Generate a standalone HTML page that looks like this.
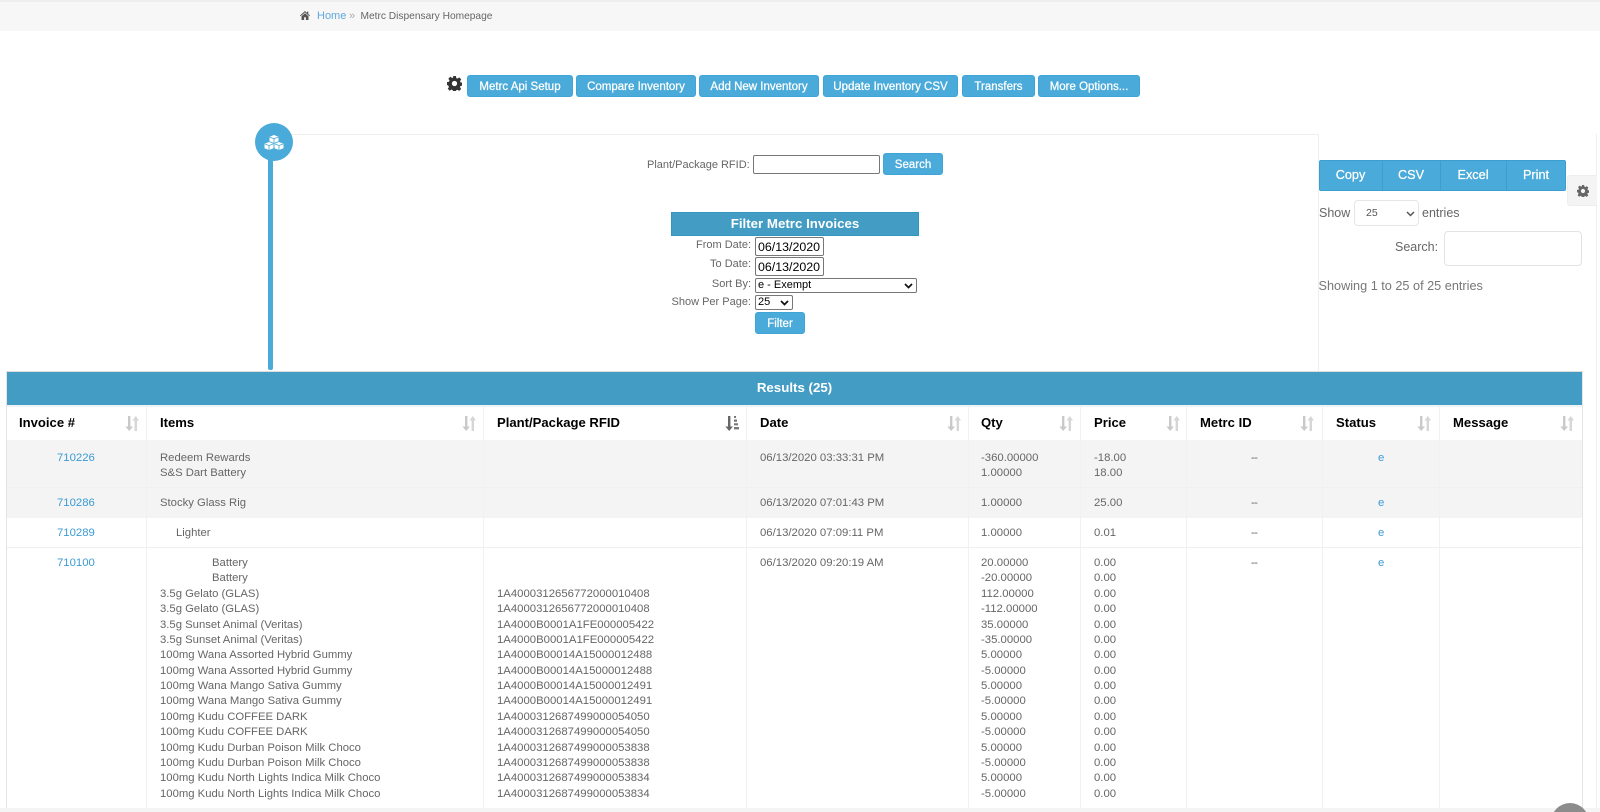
<!DOCTYPE html>
<html lang="en"><head><meta charset="utf-8"><title>Metrc Dispensary Homepage</title>
<style>
*{box-sizing:border-box}
html,body{margin:0;padding:0;width:1600px;height:812px;overflow:hidden;background:#fff}
body{position:relative;font-family:"Liberation Sans",sans-serif;font-size:11.5px;color:#666}
.a{position:absolute}
.t{position:absolute;white-space:pre}
.btn{position:absolute;top:75px;height:22px;background:#4aaad9;border:1px solid #3ea5d6;border-radius:3px;color:#fff;font-size:11.5px;font-weight:normal;-webkit-text-stroke:.25px #fff;text-align:center;line-height:23px;white-space:nowrap}
.lbl{position:absolute;right:849px;text-align:right;white-space:pre;font-size:11px;line-height:14px;color:#666}
.inp{position:absolute;background:#fff;border:1px solid #777;border-radius:2px;color:#000;font-size:11.5px;padding-left:2px;white-space:pre}
.sel svg{position:absolute;right:3px;top:4px}
.vl{position:absolute;top:407px;height:401px;width:1px;background:#f1f1f1}
.h{position:absolute;top:415px;font-size:13.1px;font-weight:bold;color:#000;line-height:15px;white-space:pre}
.ls{position:absolute;line-height:15.38px;white-space:pre;font-size:11.35px;color:#666}
.lk{color:#3a9bd5}
.d{letter-spacing:-.6px}
.s{position:absolute;top:416px;width:14px;height:15px}
.ctr{text-align:center}
.cb{color:#fff;font-size:12.7px;line-height:16px;-webkit-text-stroke:.25px #fff}
</style></head><body>
<svg width="0" height="0" style="position:absolute">
<symbol id="sort" viewBox="0 0 14 15"><path d="M3 0h2.400v10.500H8L4.200 15 .4 10.500H3z" fill="#c9c9c9"/><path d="M9.600 15h2.400V4.500h2L10.800 0 7.400 4.500h2.200z" fill="#d6d6d6"/></symbol>
<symbol id="gear" viewBox="0 0 16 16"><path fill-rule="evenodd" d="M6.500 0h3l.4 2.200 1.300.6 1.900-1.300 2.100 2.100-1.300 1.900.6 1.300 2 .4v3l-2.100.4-.6 1.300 1.300 1.900-2.100 2.100-1.900-1.300-1.300.6-.3 1.800h-3l-.4-2-1.300-.6-1.900 1.300-2.100-2.100 1.300-1.900-.6-1.300L0 9.500v-3l2.100-.4.6-1.300L1.400 2.900l2.100-2.100 1.900 1.300 1.300-.6zM8 5.200a2.800 2.800 0 1 0 0 5.600 2.800 2.800 0 0 0 0-5.600z"/></symbol>
</svg>

<!-- breadcrumb -->
<div class="a" style="left:0;top:0;width:1600px;height:2px;background:#eee"></div>
<div class="a" style="left:0;top:2px;width:1600px;height:29px;background:#f7f7f7"></div>
<svg class="a" style="left:300px;top:11px" width="10" height="9" viewBox="0 0 10 9"><path d="M5 0 0 4.500l.6.7L5 1.400l4.400 3.800.6-.7L8.300 3V.6H7v1.300zM1.500 5.200V9h2.600V6.200h1.800V9h2.600V5.200L5 2.200z" fill="#555"/></svg>
<div class="t" style="left:317px;top:9px;font-size:11px;line-height:14px;color:#5fa9dc">Home</div>
<div class="t" style="left:349px;top:9px;font-size:11px;line-height:14px;color:#aaa">»</div>
<div class="t" style="left:360.500px;top:10px;font-size:10.2px;line-height:14px;color:#666">Metrc Dispensary Homepage</div>

<!-- top buttons -->
<svg class="a" style="left:447px;top:76px" width="15" height="15" fill="#333"><use href="#gear" width="15" height="15"/></svg>
<div class="btn" style="left:467px;width:106px">Metrc Api Setup</div>
<div class="btn" style="left:576px;width:120px">Compare Inventory</div>
<div class="btn" style="left:699px;width:120px">Add New Inventory</div>
<div class="btn" style="left:823px;width:135px">Update Inventory CSV</div>
<div class="btn" style="left:962px;width:73px">Transfers</div>
<div class="btn" style="left:1038px;width:102px">More Options...</div>

<!-- panel -->
<div class="a" style="left:290px;top:134px;width:1029px;height:1px;background:#eee"></div>
<div class="a" style="left:1318px;top:134px;width:1px;height:238px;background:#eee"></div>
<div class="a" style="left:1596px;top:134px;width:1px;height:674px;background:#eee"></div>
<div class="a" style="left:268px;top:150px;width:5px;height:220px;background:#4aaad9;border-radius:0 0 2px 2px"></div>
<div class="a" style="left:255px;top:123px;width:38px;height:38px;border-radius:50%;background:#4aaad9"></div>
<svg class="a" style="left:264px;top:135px" width="20" height="15" viewBox="0 0 20 15" fill="#fff"><path d="M10 0l4.500 1.800v4.400L10 8 5.500 6.200V1.800z"/><path d="M5 7l4.500 1.800v4.400L5 15 .5 13.200V8.800z"/><path d="M15 7l4.500 1.800v4.400L15 15l-4.500-1.800V8.800z"/><path d="M5.500 2 10 3.800 14.500 2M10 3.800V8M1 9l4 1.600L9 9M5 10.600V15M11 9l4 1.600L19 9M15 10.600V15" stroke="#4aaad9" stroke-width=".8" fill="none"/></svg>

<div class="t" style="left:647px;top:158px;font-size:11px;line-height:14px">Plant/Package RFID:</div>
<div class="inp" style="left:753px;top:155px;width:127px;height:19px"></div>
<div class="btn" style="left:883px;top:153px;width:60px">Search</div>

<div class="a ctr" style="left:671px;top:212px;width:248px;height:24px;background:#429cc3;border:1px solid #2f97c0;color:#fff;font-size:13.3px;font-weight:bold;line-height:22px">Filter Metrc Invoices</div>
<div class="lbl" style="top:238px">From Date:</div>
<div class="inp" style="left:755px;top:237px;width:69px;height:19px;line-height:19px;font-size:12.4px">06/13/2020</div>
<div class="lbl" style="top:257px">To Date:</div>
<div class="inp" style="left:755px;top:257px;width:69px;height:19px;line-height:19px;font-size:12.4px">06/13/2020</div>
<div class="lbl" style="top:277px">Sort By:</div>
<div class="inp sel" style="left:755px;top:278px;width:162px;height:15px;line-height:13.500px;font-size:11px">e - Exempt<svg width="9" height="6" viewBox="0 0 9 6"><path d="M1 1l3.500 3.500L8 1" fill="none" stroke="#111" stroke-width="1.700"/></svg></div>
<div class="lbl" style="top:295px">Show Per Page:</div>
<div class="inp sel" style="left:755px;top:295px;width:38px;height:15px;line-height:13.500px;font-size:11px">25<svg width="9" height="6" viewBox="0 0 9 6"><path d="M1 1l3.500 3.500L8 1" fill="none" stroke="#111" stroke-width="1.700"/></svg></div>
<div class="btn" style="left:755px;top:312px;width:50px">Filter</div>

<!-- right controls -->
<div class="a" style="left:1319px;top:160px;width:247px;height:31px;background:#4aaad9;border:1px solid #3a9fcf;border-radius:2px"></div>
<div class="a" style="left:1382px;top:160px;width:1px;height:31px;background:#3f9ccb"></div>
<div class="a" style="left:1440px;top:160px;width:1px;height:31px;background:#3f9ccb"></div>
<div class="a" style="left:1506px;top:160px;width:1px;height:31px;background:#3f9ccb"></div>
<div class="t ctr cb" style="left:1319px;top:167px;width:63px">Copy</div>
<div class="t ctr cb" style="left:1382px;top:167px;width:58px">CSV</div>
<div class="t ctr cb" style="left:1440px;top:167px;width:66px">Excel</div>
<div class="t ctr cb" style="left:1506px;top:167px;width:60px">Print</div>
<div class="a" style="left:1567px;top:175px;width:30px;height:31px;background:#f4f4f4;border-radius:3px 0 0 3px;border:1px solid #eee;border-right:0"></div>
<svg class="a" style="left:1577px;top:185px" width="12" height="12" fill="#666"><use href="#gear" width="12" height="12"/></svg>

<div class="t" style="left:1319px;top:204.500px;font-size:12.5px;line-height:16px">Show</div>
<div class="a" style="left:1354px;top:200px;width:65px;height:26px;border:1px solid #e6e6e6;border-radius:4px"></div>
<div class="t" style="left:1366px;top:206px;font-size:10.5px;line-height:14px;color:#555">25</div>
<svg class="a" style="left:1406px;top:211px" width="9" height="6" viewBox="0 0 9 6"><path d="M1 1l3.500 3.500L8 1" fill="none" stroke="#555" stroke-width="1.500"/></svg>
<div class="t" style="left:1422px;top:204.500px;font-size:12.5px;line-height:16px">entries</div>
<div class="t" style="left:1395px;top:239px;font-size:12.5px;line-height:16px">Search:</div>
<div class="a" style="left:1444px;top:231px;width:138px;height:35px;border:1px solid #e3e3e3;border-radius:4px"></div>
<div class="t" style="left:1318.500px;top:278px;font-size:12.7px;line-height:16px;color:#777">Showing 1 to 25 of 25 entries</div>

<!-- results bar -->
<div class="a" style="left:6px;top:371px;width:1577px;height:437px;border-left:1px solid #e4e4e4;border-right:1px solid #e4e4e4;border-top:1px solid #ddd"></div>
<div class="a ctr" style="left:7px;top:372px;width:1575px;height:33px;background:#429cc3;color:#fff;font-size:13.3px;font-weight:bold;line-height:31px">Results (25)</div>
<div class="a" style="left:7px;top:405px;width:1575px;height:2px;background:#eef3f5"></div>

<!-- row backgrounds -->
<div class="a" style="left:7px;top:440px;width:1575px;height:78px;background:#f4f4f4"></div>
<div class="a" style="left:7px;top:487px;width:1575px;height:1px;background:#f0f0f0"></div>
<div class="a" style="left:7px;top:547px;width:1575px;height:1px;background:#efefef"></div>
<div class="a" style="left:0;top:808px;width:1600px;height:4px;background:#f4f4f4"></div>

<!-- column lines -->
<div class="vl" style="left:146px"></div><div class="vl" style="left:483px"></div><div class="vl" style="left:746px"></div><div class="vl" style="left:968px"></div><div class="vl" style="left:1080px"></div><div class="vl" style="left:1186px"></div><div class="vl" style="left:1322px"></div><div class="vl" style="left:1439px"></div>

<!-- header -->
<div class="h" style="left:19px">Invoice #</div>
<div class="h" style="left:160px">Items</div>
<div class="h" style="left:497px">Plant/Package RFID</div>
<div class="h" style="left:760px">Date</div>
<div class="h" style="left:981px">Qty</div>
<div class="h" style="left:1094px">Price</div>
<div class="h" style="left:1200px">Metrc ID</div>
<div class="h" style="left:1336px">Status</div>
<div class="h" style="left:1453px">Message</div>
<svg class="s" style="left:125px"><use href="#sort" width="14" height="15"/></svg>
<svg class="s" style="left:462px"><use href="#sort" width="14" height="15"/></svg>
<svg class="s" style="left:725px" viewBox="0 0 14 15"><path d="M3 0h2.400v10.500H8L4.200 15 .4 10.500H3z" fill="#666"/><path d="M9 0h2v2H9zM9 3.500h3v2.200H9zM9 7.200h4v2.200H9zM9 11h5v2.400H9z" fill="#777"/></svg>
<svg class="s" style="left:947px"><use href="#sort" width="14" height="15"/></svg>
<svg class="s" style="left:1059px"><use href="#sort" width="14" height="15"/></svg>
<svg class="s" style="left:1166px"><use href="#sort" width="14" height="15"/></svg>
<svg class="s" style="left:1300px"><use href="#sort" width="14" height="15"/></svg>
<svg class="s" style="left:1417px"><use href="#sort" width="14" height="15"/></svg>
<svg class="s" style="left:1560px"><use href="#sort" width="14" height="15"/></svg>

<!-- row 1 -->
<div class="ls lk" style="left:57px;top:451px">710226</div>
<div class="ls" style="left:160px;top:451px;font-size:11.3px">Redeem Rewards
S&amp;S Dart Battery</div>
<div class="ls" style="left:760px;top:451px">06/13/2020 03:33:31 PM</div>
<div class="ls" style="left:981px;top:451px">-360.00000
1.00000</div>
<div class="ls" style="left:1094px;top:451px">-18.00
18.00</div>
<div class="ls d" style="left:1251px;top:451px">--</div>
<div class="ls lk" style="left:1378px;top:451px">e</div>
<!-- row 2 -->
<div class="ls lk" style="left:57px;top:496px">710286</div>
<div class="ls" style="left:160px;top:496px;font-size:11.3px">Stocky Glass Rig</div>
<div class="ls" style="left:760px;top:496px">06/13/2020 07:01:43 PM</div>
<div class="ls" style="left:981px;top:496px">1.00000</div>
<div class="ls" style="left:1094px;top:496px">25.00</div>
<div class="ls d" style="left:1251px;top:496px">--</div>
<div class="ls lk" style="left:1378px;top:496px">e</div>
<!-- row 3 -->
<div class="ls lk" style="left:57px;top:526px">710289</div>
<div class="ls" style="left:176px;top:526px;font-size:11.3px">Lighter</div>
<div class="ls" style="left:760px;top:526px">06/13/2020 07:09:11 PM</div>
<div class="ls" style="left:981px;top:526px">1.00000</div>
<div class="ls" style="left:1094px;top:526px">0.01</div>
<div class="ls d" style="left:1251px;top:526px">--</div>
<div class="ls lk" style="left:1378px;top:526px">e</div>
<!-- row 4 -->
<div class="ls lk" style="left:57px;top:556px">710100</div>
<div class="ls" style="left:212px;top:556px;font-size:11.3px">Battery
Battery</div>
<div class="ls" style="left:160px;top:586.760px;font-size:11.3px">3.5g Gelato (GLAS)
3.5g Gelato (GLAS)
3.5g Sunset Animal (Veritas)
3.5g Sunset Animal (Veritas)
100mg Wana Assorted Hybrid Gummy
100mg Wana Assorted Hybrid Gummy
100mg Wana Mango Sativa Gummy
100mg Wana Mango Sativa Gummy
100mg Kudu COFFEE DARK
100mg Kudu COFFEE DARK
100mg Kudu Durban Poison Milk Choco
100mg Kudu Durban Poison Milk Choco
100mg Kudu North Lights Indica Milk Choco
100mg Kudu North Lights Indica Milk Choco</div>
<div class="ls" style="left:497px;top:586.760px">1A4000312656772000010408
1A4000312656772000010408
1A4000B0001A1FE000005422
1A4000B0001A1FE000005422
1A4000B00014A15000012488
1A4000B00014A15000012488
1A4000B00014A15000012491
1A4000B00014A15000012491
1A4000312687499000054050
1A4000312687499000054050
1A4000312687499000053838
1A4000312687499000053838
1A4000312687499000053834
1A4000312687499000053834</div>
<div class="ls" style="left:760px;top:556px">06/13/2020 09:20:19 AM</div>
<div class="ls" style="left:981px;top:556px">20.00000
-20.00000
112.00000
-112.00000
35.00000
-35.00000
5.00000
-5.00000
5.00000
-5.00000
5.00000
-5.00000
5.00000
-5.00000
5.00000
-5.00000</div>
<div class="ls" style="left:1094px;top:556px">0.00
0.00
0.00
0.00
0.00
0.00
0.00
0.00
0.00
0.00
0.00
0.00
0.00
0.00
0.00
0.00</div>
<div class="ls d" style="left:1251px;top:556px">--</div>
<div class="ls lk" style="left:1378px;top:556px">e</div>

<!-- scroll-top circle -->
<div class="a" style="left:1551px;top:803px;width:38px;height:38px;border-radius:50%;background:#8c8c8c"></div>
</body></html>
